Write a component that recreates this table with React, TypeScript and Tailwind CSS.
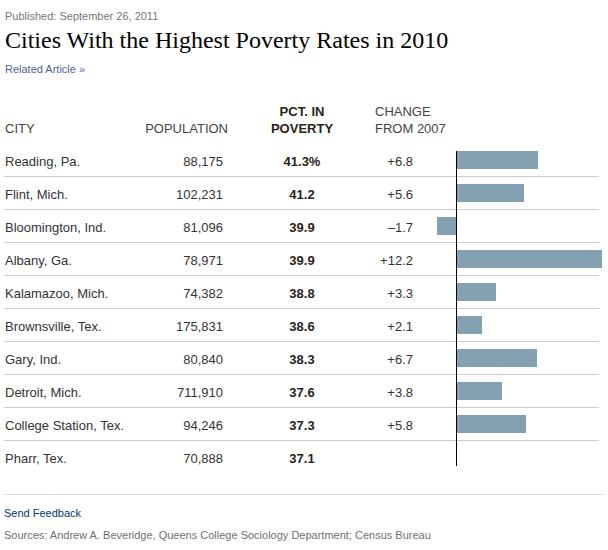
import React from "react";

type Row = { city: string; pop: string; pct: string; change: string; v: number | null };

const rows: Row[] = [
  { city: "Reading, Pa.", pop: "88,175", pct: "41.3%", change: "+6.8", v: 6.8 },
  { city: "Flint, Mich.", pop: "102,231", pct: "41.2", change: "+5.6", v: 5.6 },
  { city: "Bloomington, Ind.", pop: "81,096", pct: "39.9", change: "\u20131.7", v: -1.7 },
  { city: "Albany, Ga.", pop: "78,971", pct: "39.9", change: "+12.2", v: 12.2 },
  { city: "Kalamazoo, Mich.", pop: "74,382", pct: "38.8", change: "+3.3", v: 3.3 },
  { city: "Brownsville, Tex.", pop: "175,831", pct: "38.6", change: "+2.1", v: 2.1 },
  { city: "Gary, Ind.", pop: "80,840", pct: "38.3", change: "+6.7", v: 6.7 },
  { city: "Detroit, Mich.", pop: "711,910", pct: "37.6", change: "+3.8", v: 3.8 },
  { city: "College Station, Tex.", pop: "94,246", pct: "37.3", change: "+5.8", v: 5.8 },
  { city: "Pharr, Tex.", pop: "70,888", pct: "37.1", change: "", v: null },
];

const SCALE = 11.9;

export default function App() {
  return (
    <div
      className="w-[608px] h-[550px] bg-white overflow-hidden text-[#333]"
      style={{ fontFamily: '"Liberation Sans", Arial, sans-serif' }}
    >
      <div className="pl-[5px] pt-[10px] text-[11px] leading-[13px] text-[#777]">
        Published: September 26, 2011
      </div>
      <h1
        className="pl-[5px] mt-[3px] text-[24px] leading-[28px] text-black font-normal"
        style={{ fontFamily: '"Liberation Serif", Georgia, serif' }}
      >
        Cities With the Highest Poverty Rates in 2010
      </h1>
      <div className="pl-[5px] mt-[9px] text-[11px] leading-[13px] text-[#55609a]">
        Related Article »
      </div>

      {/* Header */}
      <div className="ml-[4px] w-[595px] mt-[27px] grid grid-cols-[140px_84px_148px_80px_143px] text-[13px] leading-[17px] text-[#444]">
        <div className="pl-[1px] pt-[17px]">CITY</div>
        <div className="pt-[17px] text-right">POPULATION</div>
        <div className="text-center font-bold text-[#2a2318]">
          <div>PCT. IN</div>
          <div>POVERTY</div>
        </div>
        <div className="-ml-px">
          <div>CHANGE</div>
          <div>FROM 2007</div>
        </div>
        <div />
      </div>

      {/* Rows */}
      <div className="ml-[4px] w-[595px] mt-[7px]">
        {rows.map((r, i) => {
          const first = i === 0;
          const last = i === rows.length - 1;
          return (
            <div
              key={r.city}
              className={
                "grid grid-cols-[140px_84px_148px_80px_143px] text-[13px] leading-[15px] " +
                (last ? "h-[32px]" : "h-[33px] border-b border-[#cccccc]")
              }
            >
              <div className="pl-[1px] pt-[10px] whitespace-nowrap">{r.city}</div>
              <div className="pt-[10px] pr-[5px] text-right">{r.pop}</div>
              <div className="pt-[10px] text-center font-bold text-[#2a2318]">{r.pct}</div>
              <div className="pt-[10px] pr-[43px] text-right">{r.change}</div>
              <div className="relative">
                {r.v !== null && r.v > 0 && (
                  <div
                    className="absolute top-[7px] h-[18px] left-[1px] bg-[#84a1b1]"
                    style={{ width: Math.round(r.v * SCALE) }}
                  />
                )}
                {r.v !== null && r.v < 0 && (
                  <div
                    className="absolute top-[7px] h-[18px] bg-[#84a1b1]"
                    style={{ width: Math.round(-r.v * SCALE), left: -Math.round(-r.v * SCALE) + 1 }}
                  />
                )}
                <div
                  className={
                    "absolute left-0 w-px bg-black " +
                    (first ? "top-[7px] " : "top-0 ") +
                    (last ? "bottom-[7px]" : "-bottom-px")
                  }
                />
              </div>
            </div>
          );
        })}
      </div>

      {/* Footer */}
      <div className="ml-[4px] w-[600px] mt-[21px] border-t border-[#dddddd] pt-[12px]">
        <div className="text-[11px] leading-[13px] text-[#003a70]">Send Feedback</div>
        <div className="mt-[9px] text-[11px] leading-[13px] text-[#707070]">
          Sources: Andrew A. Beveridge, Queens College Sociology Department; Census Bureau
        </div>
      </div>
    </div>
  );
}
